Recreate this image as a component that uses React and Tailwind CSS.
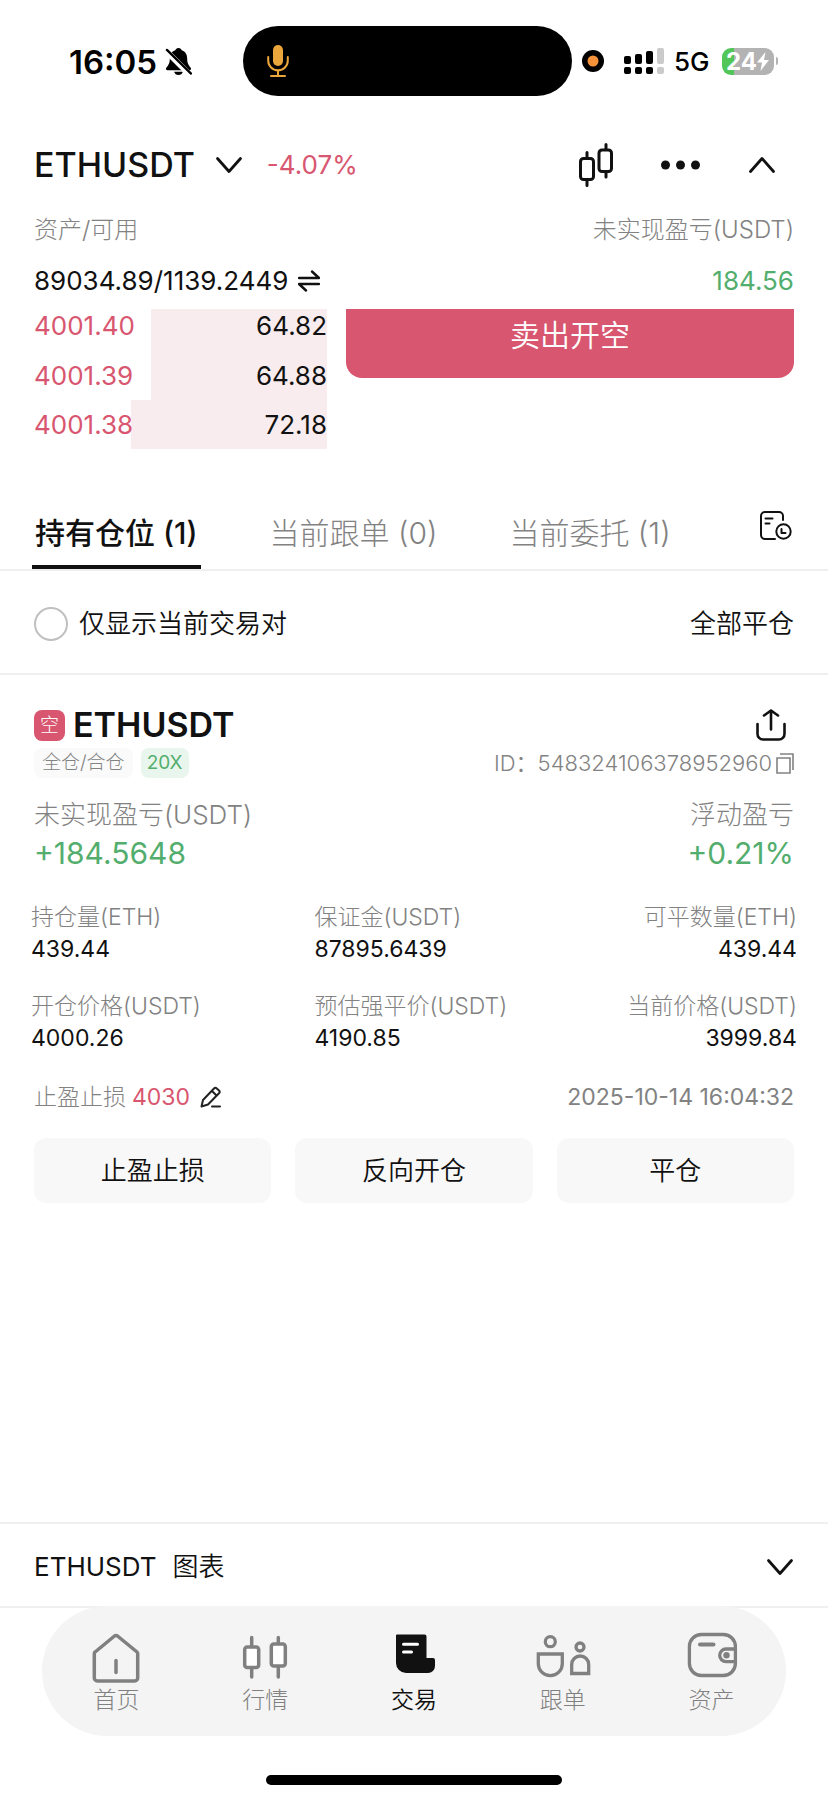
const ASKS = [
  { price: '4001.40', size: '64.82', depth: 60, height: 'h-[42px] pb-2' },
  { price: '4001.39', size: '64.88', depth: 60, height: 'h-[49px]' },
  { price: '4001.38', size: '72.18', depth: 67, height: 'h-[49px]' },
]

const TABS = [
  { label: '持有仓位 (1)', active: true },
  { label: '当前跟单 (0)' },
  { label: '当前委托 (1)' },
]

const POSITION_FIELDS = [
  { label: '持仓量(ETH)', value: '439.44' },
  { label: '保证金(USDT)', value: '87895.6439' },
  { label: '可平数量(ETH)', value: '439.44', right: true },
  { label: '开仓价格(USDT)', value: '4000.26' },
  { label: '预估强平价(USDT)', value: '4190.85' },
  { label: '当前价格(USDT)', value: '3999.84', right: true },
]

const ACTIONS = ['止盈止损', '反向开仓', '平仓']

const stroke = {
  fill: 'none',
  stroke: 'currentColor',
  strokeLinecap: 'round',
  strokeLinejoin: 'round',
}

function Chevron({ up }) {
  return (
    <svg width="28" height="18" viewBox="0 0 28 18" strokeWidth="2.800" {...stroke} aria-hidden>
      <path d={up ? 'M2.500 15.500 14 2.500l11.500 13' : 'M2.500 2.500 14 15.500l11.500-13'} />
    </svg>
  )
}

function StatusBar() {
  return (
    <div className="grid grid-cols-[243fr_329px_256fr] items-center pt-[26px] h-24 text-black">
      <div className="min-w-0 flex items-center gap-2 pl-[69px]">
        <span className="pt-0.5 text-[33px] leading-10 font-semibold">16:05</span>
        <svg width="27" height="29" viewBox="0 0 28 30" aria-label="静音">
          <path
            fill="currentColor"
            d="M14 1c-1.800 0-3 1-3.300 2.400C6.800 4.600 5 8 5 12c0 5-1.600 7-3.600 9.500C.4 22.800 1.200 24 2.800 24h22.400c1.600 0 2.400-1.200 1.400-2.500C24.600 19 23 17 23 12c0-4-1.800-7.400-5.700-8.600C17 2 15.800 1 14 1zM9.500 25.500h9c-.5 2-2.200 3.500-4.500 3.500s-4-1.500-4.500-3.500z"
          />
          <path d="M1 4 26 29" stroke="#fff" strokeWidth="6" />
          <path d="M2 3 27 27.500" stroke="currentColor" strokeWidth="2.400" strokeLinecap="round" />
        </svg>
      </div>
      <div className="h-[70px] rounded-full bg-black flex items-center pl-6">
        <svg width="22" height="34" viewBox="0 0 22 34" className="text-[#eaa63a]" aria-hidden>
          <rect x="6" y="1" width="10" height="21" rx="5" fill="currentColor" />
          <path d="M1.200 13v3.500a9.800 9.800 0 0 0 19.600 0V13M11 27v5M4 32h14" strokeWidth="2" {...stroke} />
        </svg>
      </div>
      <div className="min-w-0 flex items-center pl-2.5">
        <svg width="22" height="22" viewBox="0 0 22 22" aria-hidden>
          <circle cx="11" cy="11" r="11" fill="#000" />
          <circle cx="11" cy="11" r="5.500" fill="#f5923a" />
        </svg>
        <svg width="40" height="28" viewBox="0 0 40 28" className="ml-5" aria-hidden>
          <g fill="#000">
            <rect x="0" y="9" width="7" height="8" rx="2" />
            <rect x="11" y="7" width="7" height="10" rx="2" />
            <rect x="22" y="4" width="7" height="13" rx="2" />
            <rect x="0" y="20" width="7" height="7" rx="2" />
            <rect x="11" y="20" width="7" height="7" rx="2" />
            <rect x="22" y="20" width="7" height="7" rx="2" />
          </g>
          <g fill="#cacaca">
            <rect x="33" y="1" width="7" height="16" rx="2" />
            <rect x="33" y="20" width="7" height="7" rx="2" />
          </g>
        </svg>
        <span className="ml-2.5 pt-0.5 text-[26px] leading-8 font-medium">5G</span>
        <div className="ml-3 flex items-center">
          <div className="w-[52px] h-[27px] rounded-[9px] bg-[linear-gradient(90deg,#53c65a_24%,#b3b3b3_24%)] flex items-center justify-center text-white">
            <span className="text-[24px] leading-[27px] font-bold">24</span>
            <svg width="12" height="19" viewBox="0 0 12 19" aria-hidden>
              <path d="M8.500 0 0 10.500h5L3.500 19 12 8H7z" fill="currentColor" />
            </svg>
          </div>
          <div className="w-0.5 h-2 ml-0.5 rounded-r-full bg-[#b3b3b3]" />
        </div>
      </div>
    </div>
  )
}

function PairHeader() {
  return (
    <header className="mt-[27px] h-[84px] flex items-center pl-[34px] pr-[52px]">
      <button className="flex items-center gap-5">
        <h1 className="text-[34px] leading-10 font-medium">ETHUSDT</h1>
        <Chevron />
      </button>
      <span className="ml-6 text-[26px] leading-8 text-[#d8566f]">-4.07%</span>
      <div className="ml-auto flex items-center gap-12">
        <button aria-label="K线">
          <svg width="34" height="44" viewBox="0 0 34 44" strokeWidth="3" {...stroke} aria-hidden>
            <rect x="1.500" y="15.500" width="13" height="21" rx="3" />
            <path d="M8 9.500v6M8 36.500v6M27 1.500v5M27 28.500v5.500" />
            <rect x="20" y="7" width="12.500" height="21.500" rx="3" />
          </svg>
        </button>
        <button aria-label="更多">
          <svg width="39" height="10" viewBox="0 0 39 10" fill="currentColor" aria-hidden>
            <circle cx="4.500" cy="5" r="4.500" />
            <circle cx="19.500" cy="5" r="4.500" />
            <circle cx="34.500" cy="5" r="4.500" />
          </svg>
        </button>
        <button aria-label="收起">
          <Chevron up />
        </button>
      </div>
    </header>
  )
}

function Assets() {
  return (
    <section className="px-[34px]">
      <div className="h-[46px] flex items-center justify-between text-[24px] leading-8 text-[#828282] font-light">
        <span>资产/可用</span>
        <span>未实现盈亏(USDT)</span>
      </div>
      <div className="h-14 flex items-center justify-between text-[26px] leading-8">
        <span className="flex items-center gap-2.5">
          89034.89/1139.2449
          <button aria-label="划转">
            <svg width="22" height="22" viewBox="0 0 22 22" strokeWidth="2.400" {...stroke} aria-hidden>
              <path d="M1 8h20l-7-6.500M21 14H1l7 6.500" />
            </svg>
          </button>
        </span>
        <span className="text-[#53ae6e]">184.56</span>
      </div>
    </section>
  )
}

function OrderBook() {
  return (
    <section className="px-[34px] flex items-start gap-[19px]">
      <ul className="w-[293px]">
        {ASKS.map((level) => (
          <li
            key={level.price}
            className={`flex items-center justify-between text-[26px] leading-8 ${level.height}`}
            style={{
              backgroundImage: `linear-gradient(to left, #f8ecee ${level.depth}%, transparent ${level.depth}%)`,
            }}
          >
            <span className="text-[#d8566f]">{level.price}</span>
            <span>{level.size}</span>
          </li>
        ))}
      </ul>
      <button className="flex-1 h-[69px] pb-[18px] rounded-b-2xl bg-[#d8566f] text-white text-[30px] leading-9 font-[350]">
        卖出开空
      </button>
    </section>
  )
}

function Tabs() {
  return (
    <nav className="mt-[50px] px-8 flex items-start border-b-2 border-[#efefef]">
      <div className="flex gap-[66px]">
        {TABS.map((tab) => (
          <button
            key={tab.label}
            className={
              tab.active
                ? 'h-[70px] px-[3px] pt-0.5 border-b-4 border-[#111] text-[30px] leading-9 font-medium'
                : 'h-[70px] px-[3px] pt-0.5 border-b-4 border-transparent text-[30px] leading-9 font-light text-[#828282]'
            }
          >
            {tab.label}
          </button>
        ))}
      </div>
      <button className="ml-auto mt-3 mr-1" aria-label="历史记录">
        <svg width="32" height="30" viewBox="0 0 32 30" strokeWidth="2" {...stroke} aria-hidden>
          <path d="M23 9V5a4 4 0 0 0-4-4H5a4 4 0 0 0-4 4v19a4 4 0 0 0 4 4h10" />
          <path d="M5.500 7.500h7M5.500 12.500h4" />
          <circle cx="23.500" cy="20.500" r="7.200" />
          <path d="M21.500 18v4h4" />
        </svg>
      </button>
    </nav>
  )
}

function PairFilter() {
  return (
    <div className="h-[104px] pt-1 px-[34px] flex items-center justify-between border-b-2 border-[#efefef] text-[26px] leading-8 font-[350]">
      <label className="flex items-center gap-[11px]">
        <input type="checkbox" className="appearance-none size-[34px] rounded-full border-2 border-[#c0c0c0] checked:bg-black" />
        仅显示当前交易对
      </label>
      <button>全部平仓</button>
    </div>
  )
}

function PositionCard() {
  return (
    <section className="px-[34px] pt-[29px]">
      <div className="h-[42px] flex items-center">
        <span className="size-[31px] rounded-lg bg-[#d8566f] text-white text-[19px] leading-[31px] text-center font-light">空</span>
        <h2 className="ml-2 text-[34px] leading-10 font-semibold">ETHUSDT</h2>
        <button className="ml-auto mr-2" aria-label="分享">
          <svg width="30" height="32" viewBox="0 0 30 32" strokeWidth="2.600" {...stroke} aria-hidden>
            <path d="M1.500 15v10a5.500 5.500 0 0 0 5.500 5.500h16a5.500 5.500 0 0 0 5.500-5.500V15M15 20.500V1.500M8 6.500l7-5 7 5" />
          </svg>
        </button>
      </div>

      <div className="mt-0.5 h-[30px] flex items-center text-[#828282] font-light">
        <span className="px-2 rounded-lg bg-[#fafafa] text-[19px] leading-[30px]">全仓/合仓</span>
        <span className="ml-2 px-1.5 rounded-lg bg-[#e9f6ed] text-[#53ae6e] text-[19px] leading-[30px] font-normal">20X</span>
        <span className="ml-auto text-[22px] leading-[30px] font-[350]">ID：548324106378952960</span>
        <button className="ml-1" aria-label="复制">
          <svg width="18" height="21" viewBox="0 0 18 21" fill="none" stroke="currentColor" strokeWidth="1.600" aria-hidden>
            <path d="M1 5h13v15H1zM4 1h13v16" />
          </svg>
        </button>
      </div>

      <div className="mt-[18px] flex justify-between">
        <div>
          <div className="text-[26px] leading-[38px] text-[#828282] font-light">未实现盈亏(USDT)</div>
          <div className="text-[30px] leading-[38px] text-[#53ae6e]">+184.5648</div>
        </div>
        <div className="text-right">
          <div className="text-[26px] leading-[38px] text-[#828282] font-light">浮动盈亏</div>
          <div className="text-[30px] leading-[38px] text-[#53ae6e]">+0.21%</div>
        </div>
      </div>

      <dl className="-mx-[3px] mt-[29px] grid grid-cols-[37fr_34fr_29fr] gap-y-[25px] text-[23px] leading-8">
        {POSITION_FIELDS.map((field) => (
          <div key={field.label} className={field.right ? 'text-right whitespace-nowrap' : 'whitespace-nowrap'}>
            <dt className="text-[#828282] font-light">{field.label}</dt>
            <dd>{field.value}</dd>
          </div>
        ))}
      </dl>

      <div className="mt-[25px] h-9 flex items-center text-[23px] leading-8 text-[#828282] font-light">
        止盈止损
        <span className="ml-1.5 text-[#d8566f] font-normal">4030</span>
        <button className="ml-2.5 text-[#222]" aria-label="编辑">
          <svg width="22" height="22" viewBox="0 0 22 22" strokeWidth="2" {...stroke} aria-hidden>
            <path d="M1.500 20.500 3 14 14 2.500a2 2 0 0 1 2.800 0l2.200 2a2 2 0 0 1 0 2.800L8 18.500zM12 5l4.500 4.500M12 20.500h8" />
          </svg>
        </button>
        <time className="ml-auto font-normal">2025-10-14 16:04:32</time>
      </div>

      <div className="mt-[23px] grid grid-cols-3 gap-6">
        {ACTIONS.map((action) => (
          <button key={action} className="h-[65px] rounded-xl bg-[#f8f8f8] text-[26px] leading-8 font-[350]">
            {action}
          </button>
        ))}
      </div>
    </section>
  )
}

function HomeIcon() {
  return (
    <svg width="56" height="52" viewBox="0 0 56 52" strokeWidth="3.500" {...stroke} aria-hidden>
      <path d="M6.300 21.500a2 2 0 0 1 .8-1.500L26.500 4a2.500 2.500 0 0 1 3 0L49 20a2 2 0 0 1 .7 1.500V46a3 3 0 0 1-3 3H9.300a3 3 0 0 1-3-3z" />
      <path d="M28 28.500V40.500" />
    </svg>
  )
}

function MarketIcon() {
  return (
    <svg width="56" height="52" viewBox="0 0 56 52" strokeWidth="3.500" {...stroke} aria-hidden>
      <rect x="7.700" y="15" width="14" height="20.500" rx="2.500" fill="#fff" />
      <rect x="34.300" y="12" width="14" height="22" rx="2.500" fill="#fff" />
      <path d="M14.700 5.500V14M14.700 36v9M41.300 5.500V11M41.300 35v10" />
    </svg>
  )
}

function TradeIcon() {
  return (
    <svg width="56" height="52" viewBox="0 0 56 52" aria-hidden>
      <path
        fill="currentColor"
        d="M11 2.500h27.500a2 2 0 0 1 2 2V26h6.500a2 2 0 0 1 2 2v6a7 7 0 0 1-7 7H20a10 10 0 0 1-10-10V3.500a1 1 0 0 1 1-1z"
      />
      <path d="M17.500 12.300H31.500M17.500 20H25.500" stroke="#fff" strokeWidth="3" strokeLinecap="round" />
    </svg>
  )
}

function CopyTradeIcon() {
  return (
    <svg width="56" height="52" viewBox="0 0 56 52" fill="none" stroke="currentColor" strokeWidth="3.300" aria-hidden>
      <circle cx="15.300" cy="9.700" r="5" />
      <path d="M3.300 22h24v9.700a12 12 0 0 1-24 0z" />
      <circle cx="45" cy="15" r="4" />
      <path d="M36.700 41.500V32.500a8.500 8.500 0 0 1 17 0v9z" />
    </svg>
  )
}

function WalletIcon() {
  return (
    <svg width="56" height="52" viewBox="0 0 56 52" strokeWidth="3.300" {...stroke} aria-hidden>
      <rect x="5.400" y="2.500" width="46" height="41" rx="12" />
      <path d="M16 12.500h13.500" strokeWidth="4" />
      <path d="M51 17h-9a6.300 6.300 0 0 0 0 12.600h9" />
      <circle cx="42.500" cy="23.200" r="3.200" fill="currentColor" stroke="none" />
    </svg>
  )
}

const NAV_ITEMS = [
  { label: '首页', icon: HomeIcon },
  { label: '行情', icon: MarketIcon },
  { label: '交易', icon: TradeIcon, active: true },
  { label: '跟单', icon: CopyTradeIcon },
  { label: '资产', icon: WalletIcon },
]

function BottomNav() {
  return (
    <nav className="-mt-0.5 mx-[42px] h-[130px] pt-[26px] rounded-full bg-[#f4f4f4] grid grid-cols-5">
      {NAV_ITEMS.map(({ label, icon: Icon, active }) => (
        <a
          key={label}
          href="#"
          className={`flex flex-col items-center text-[23px] leading-8 ${active ? 'text-[#111] font-[350]' : 'text-[#808080] font-light'}`}
        >
          <Icon />
          {label}
        </a>
      ))}
    </nav>
  )
}

function App() {
  return (
    <div className="min-h-screen flex flex-col bg-white text-[#111] font-[Inter,'Noto_Sans_CJK_SC',sans-serif]">
      <StatusBar />
      <PairHeader />
      <Assets />
      <OrderBook />
      <Tabs />
      <PairFilter />
      <PositionCard />

      <button className="mt-auto h-[86px] pt-1 px-[34px] flex items-center justify-between border-y-2 border-[#f0f0f0] text-[26px] leading-8 font-[350]">
        <span className="flex gap-4">
          <span className="font-normal">ETHUSDT</span>
          <span>图表</span>
        </span>
        <Chevron />
      </button>
      <BottomNav />
      {/* Home indicator */}
      <div className="mt-[39px] mb-[15px] w-[296px] h-2.5 rounded-full bg-black self-center" />
    </div>
  )
}

export default App
